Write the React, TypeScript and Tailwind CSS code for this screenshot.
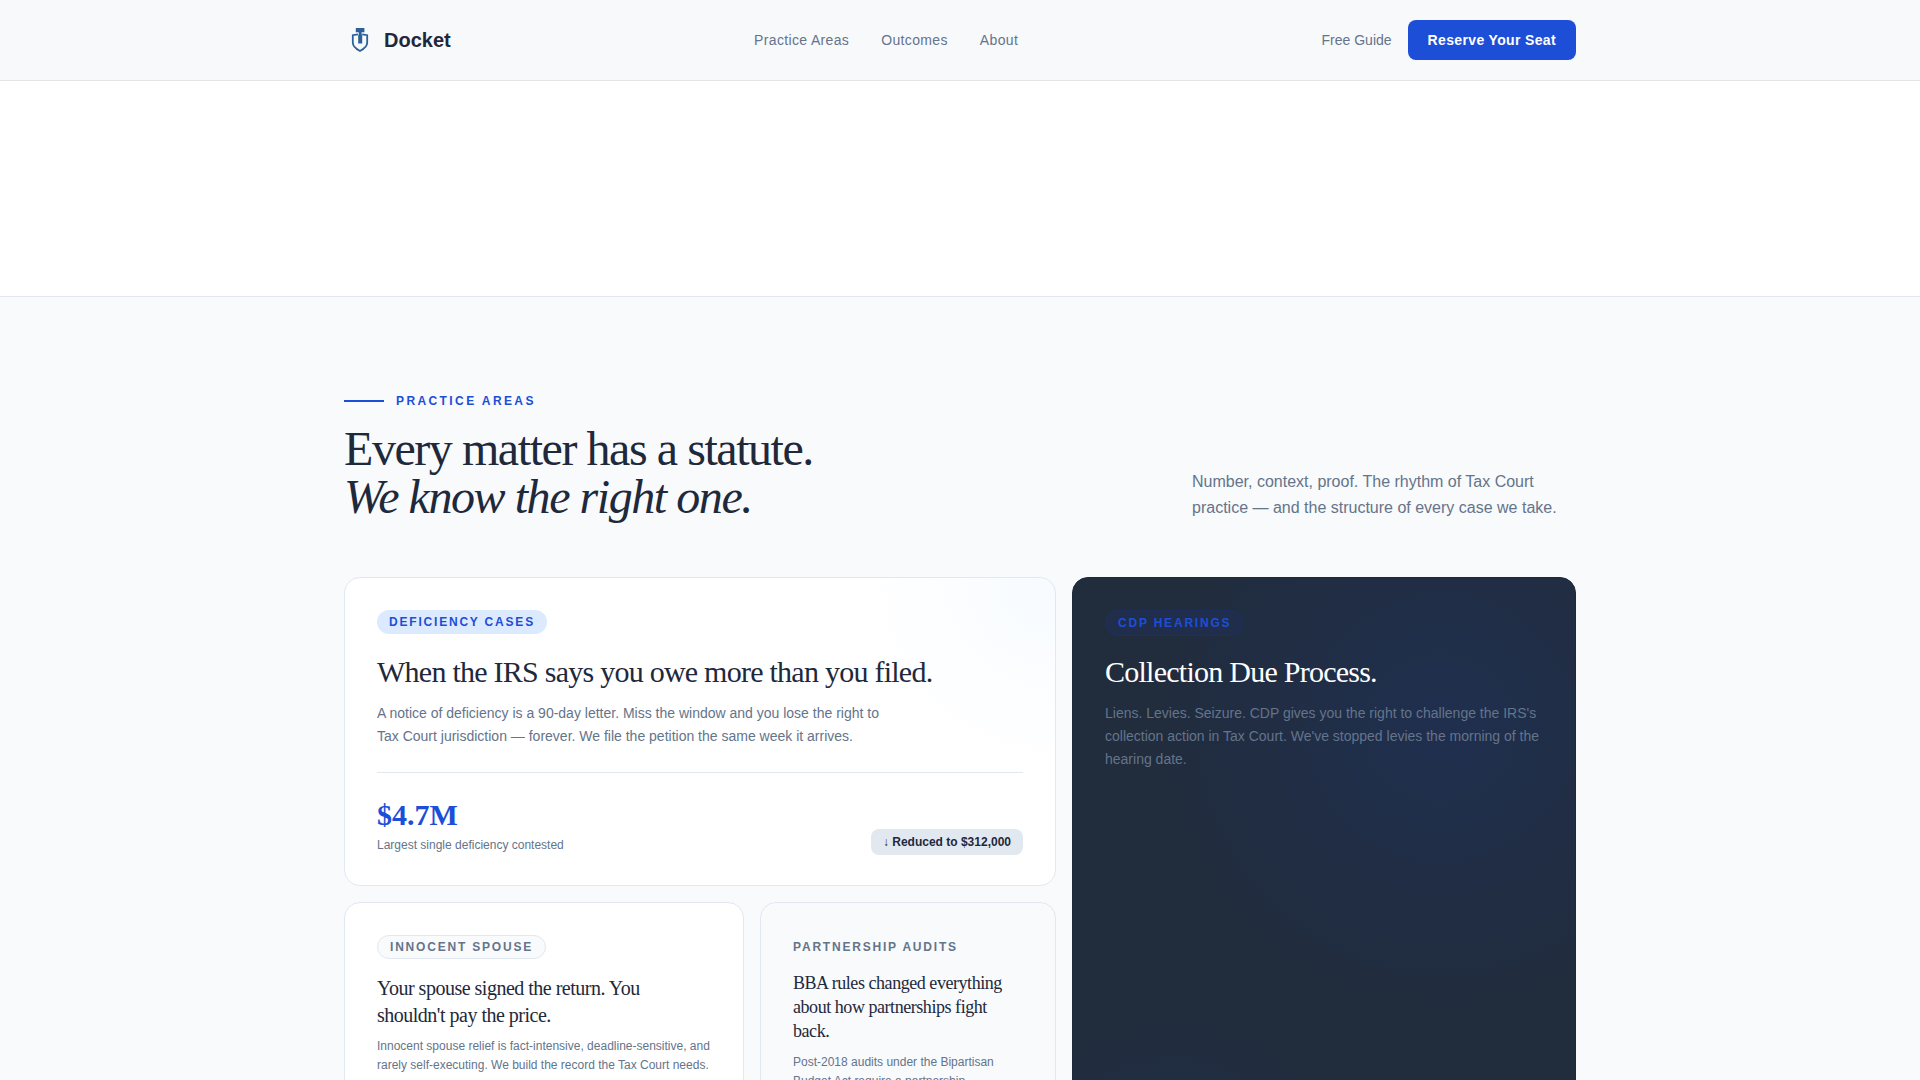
import type { ReactNode } from 'react';

const SANS = "font-['Liberation_Sans',Arial,sans-serif]";
const SERIF = "font-['Liberation_Serif','Times_New_Roman',serif]";

function Logo() {
  return (
    <svg viewBox="0 0 32 32" className="size-8" aria-hidden="true">
      <path
        d="M14 10.4 L8.8 11.2 V18.6 C8.8 22.4 11.6 24.8 16 27 C20.4 24.8 23.2 22.4 23.2 18.6 V11.2 L18.2 10.4"
        fill="none"
        stroke="#2a6198"
        strokeWidth="1.8"
      />
      <path d="M11.8 4 H20.4 V8.2 H17.6 V10.4 L18.2 11 V19.6 H14.2 V11 L14.8 10.4 V8.2 H11.8 Z" fill="#2a6198" />
    </svg>
  );
}

function Tag({ className, children }: { className: string; children: ReactNode }) {
  return (
    <div className={`w-fit rounded-full text-xs font-bold tracking-[0.15em] uppercase ${className}`}>
      {children}
    </div>
  );
}

export default function App() {
  return (
    <div className={`h-screen overflow-hidden bg-white text-[#1e293b] ${SANS}`}>
      <header className="border-b border-[#e2e4e8] bg-[#f8f9fb]">
        <div className="mx-auto flex h-20 max-w-7xl items-center justify-between px-6">
          <a href="#" className="flex items-center gap-2 text-xl font-bold">
            <Logo />
            Docket
          </a>
          <nav className="flex items-center gap-8 text-sm tracking-wide text-[#64748b]">
            <a href="#practice">Practice Areas</a>
            <a href="#outcomes">Outcomes</a>
            <a href="#about">About</a>
          </nav>
          <div className="flex items-center gap-4 text-sm">
            <a href="#guide" className="text-[#64748b]">Free Guide</a>
            <button type="button" className="h-10 rounded-lg bg-[#1d4ed8] px-5 font-bold tracking-wide text-white">
              Reserve Your Seat
            </button>
          </div>
        </div>
      </header>

      <main>
        <div className="h-[216px] border-b border-[#e2e8f0]" />
        <section id="practice" className="bg-[#f8fafc] py-24">
          <div className="mx-auto max-w-7xl px-6">
            <div className="mb-14 flex items-end justify-between">
              <div>
                <div className="mb-4 flex items-center gap-3">
                  <span className="h-0.5 w-10 bg-[#1d4ed8]" />
                  <span className="text-xs font-bold tracking-[0.2em] text-[#1d4ed8] uppercase">Practice Areas</span>
                </div>
                <h2 className={`text-5xl leading-none tracking-[-0.03em] ${SERIF}`}>
                  Every matter has a statute.
                  <br />
                  <em>We know the right one.</em>
                </h2>
              </div>
              <p className="w-sm text-base leading-[26px] text-[#64748b]">
                Number, context, proof. The rhythm of Tax Court practice — and the structure of every case we take.
              </p>
            </div>

            <div className="grid grid-cols-12 gap-4">
              <article className="col-span-7 rounded-2xl border border-[#e2e8f0] bg-white bg-[radial-gradient(circle_at_100%_0%,#f7fbff_0,#ffffff_192px)] p-8">
                <Tag className="bg-[#dbeafe] px-3 py-1 text-[#1d4ed8]">Deficiency Cases</Tag>
                <h3 className={`mt-5 text-3xl leading-9 tracking-tight ${SERIF}`}>
                  When the IRS says you owe more than you filed.
                </h3>
                <p className="mt-3 max-w-lg text-sm leading-[23px] text-[#64748b]">
                  A notice of deficiency is a 90-day letter. Miss the window and you lose the right to Tax Court
                  jurisdiction — forever. We file the petition the same week it arrives.
                </p>
                <div className="mt-6 flex items-end justify-between border-t border-[#e2e8f0] pt-6">
                  <div>
                    <div className={`text-3xl leading-9 font-bold text-[#1d4ed8] ${SERIF}`}>$4.7M</div>
                    <div className="mt-1 text-xs text-[#64748b]">Largest single deficiency contested</div>
                  </div>
                  <div>
                    <span className="rounded-lg bg-[#e2e8f0] px-3 py-1.5 text-xs font-bold">↓ Reduced to $312,000</span>
                  </div>
                </div>
              </article>

              <article className="col-span-5 row-span-2 rounded-2xl border border-[#1e293b] bg-[#212c3d] bg-[radial-gradient(circle_at_368px_150px,#1f2f4e_0,transparent_280px),radial-gradient(circle_at_100px_640px,#202e48_0,transparent_200px)] p-8">
                <Tag className="border border-[#1f2f5c] bg-[#202e4c] px-3 py-1 text-[#1d4ed8]">CDP Hearings</Tag>
                <h3 className={`mt-[18px] text-3xl leading-9 tracking-tight text-white ${SERIF}`}>
                  Collection Due Process.
                </h3>
                <p className="mt-3 text-sm leading-[23px] text-[#64748b]">
                  Liens. Levies. Seizure. CDP gives you the right to challenge the IRS's collection action in Tax Court.
                  We've stopped levies the morning of the hearing date.
                </p>
              </article>

              <article className="col-span-4 rounded-2xl border border-[#e2e8f0] bg-white p-8">
                <Tag className="border border-[#e2e8f0] bg-[#f8fafc] px-3 py-[3px] text-[#64748b]">Innocent Spouse</Tag>
                <h3 className={`mt-4 text-xl leading-[27px] tracking-tight ${SERIF}`}>
                  Your spouse signed the return. You shouldn't pay the price.
                </h3>
                <p className="mt-2 text-xs leading-[19px] text-[#64748b]">
                  Innocent spouse relief is fact-intensive, deadline-sensitive, and rarely self-executing. We build the
                  record the Tax Court needs.
                </p>
              </article>

              <article className="col-span-3 rounded-2xl border border-[#e2e8f0] bg-[#f8fafc] p-8">
                <Tag className="py-1 text-[#64748b]">Partnership Audits</Tag>
                <h3 className={`mt-3 text-lg leading-6 tracking-tight ${SERIF}`}>
                  BBA rules changed everything about how partnerships fight back.
                </h3>
                <p className="mt-2.5 text-xs leading-[19px] text-[#64748b]">
                  Post-2018 audits under the Bipartisan Budget Act require a partnership representative.
                </p>
              </article>
            </div>
          </div>
        </section>
      </main>
    </div>
  );
}
